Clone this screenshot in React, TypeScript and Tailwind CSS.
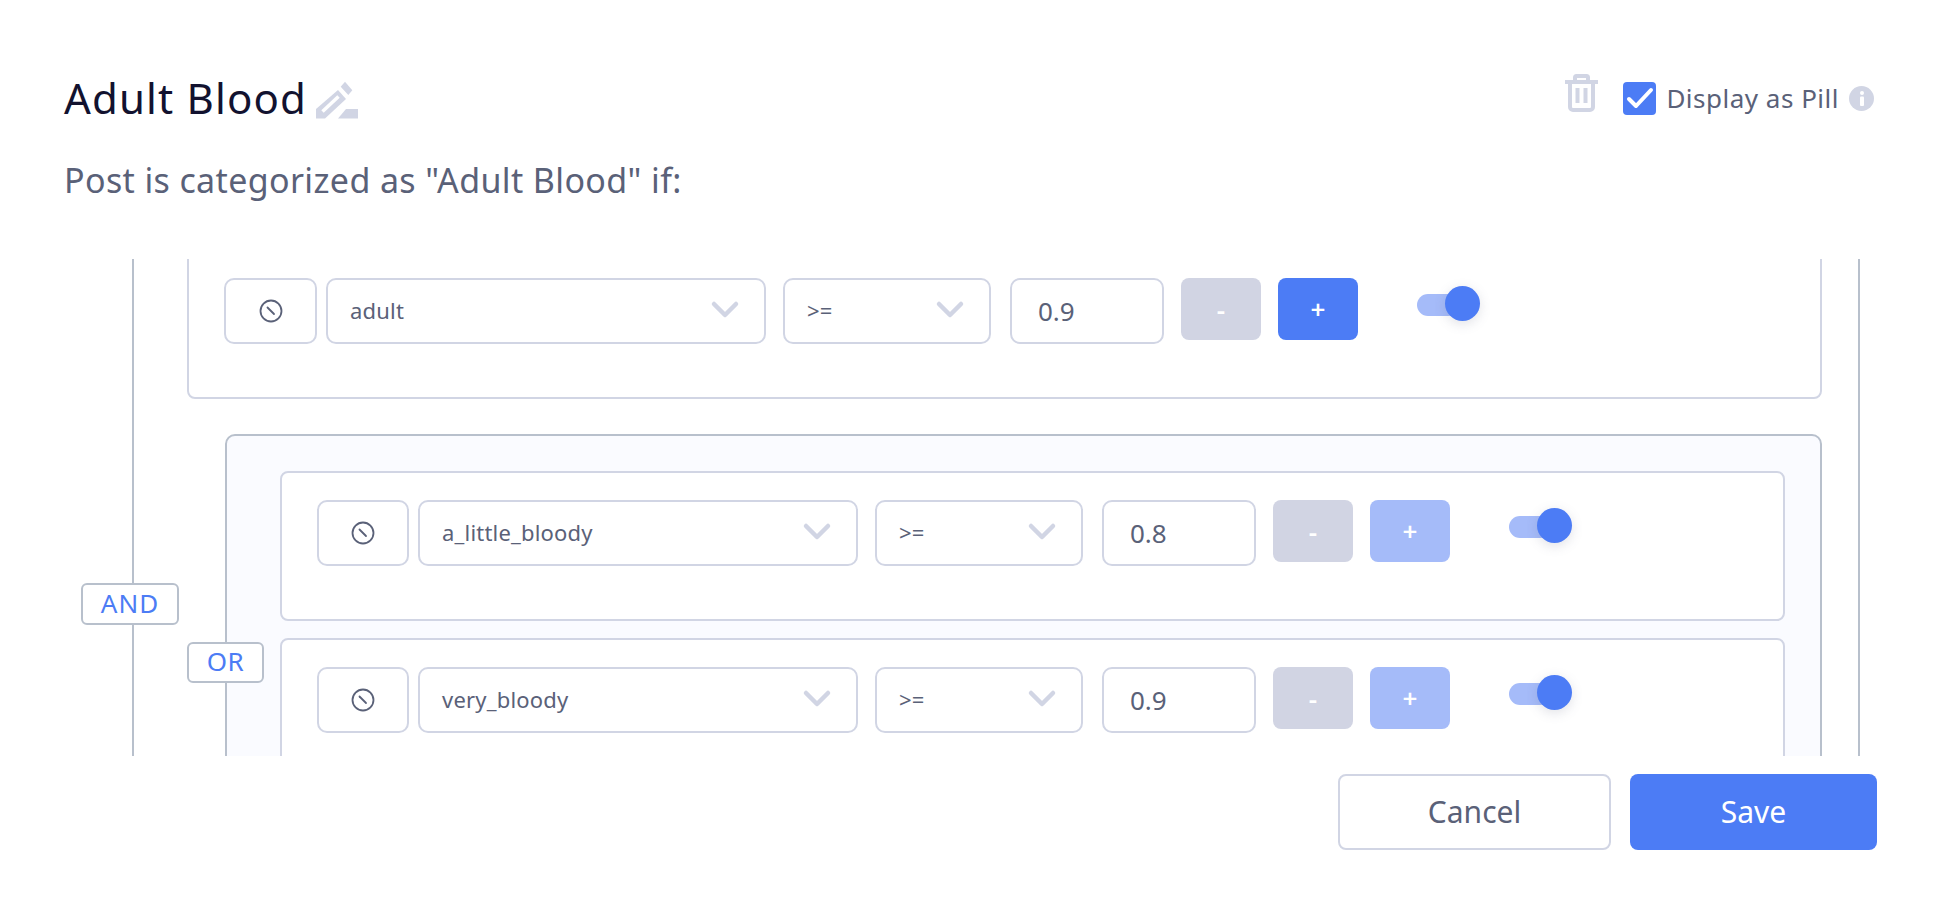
import React from 'react';

const FONT = 'font-["Noto_Sans",sans-serif]';

function BanIcon() {
  return (
    <svg width="24" height="24" viewBox="0 0 24 24" fill="none" stroke="#5a6178" strokeWidth="1.8" strokeLinecap="round">
      <circle cx="12" cy="12" r="10.5" />
      <path d="M8.5 8.5 15 15" />
    </svg>
  );
}

function Chevron() {
  return (
    <svg width="30" height="20" viewBox="0 0 30 20" fill="none" stroke="#d1d5e4" strokeWidth="4.5" strokeLinecap="round" strokeLinejoin="round">
      <path d="M4 4 15 15 26 4" />
    </svg>
  );
}

function Toggle() {
  return (
    <div className="relative w-[63px] h-[36px] shrink-0 mt-[8px] pt-[8px]">
      <div className="w-[42px] h-[22px] rounded-full bg-[#a5bbf9]" />
      <div className="absolute left-[28px] top-0 w-[35px] h-[35px] rounded-full bg-[#4c7cf5] shadow-[0_3px_12px_rgba(90,97,120,0.18)]" />
    </div>
  );
}

function ConditionRow({
  label,
  value,
  plusActive,
  iconWidth = 'w-[92px]',
}: {
  label: string;
  value: string;
  plusActive?: boolean;
  iconWidth?: string;
}) {
  const box = 'h-[66px] shrink-0 rounded-[10px] border-2 border-[#d1d5e4] bg-white flex items-center';
  return (
    <div className="flex items-start">
      <div className={`${box} ${iconWidth} justify-center`}>
        <BanIcon />
      </div>
      <div className={`${box} w-[440px] ml-[9px] pl-[22px] pr-[24px] pb-[2px] justify-between text-[22px] tracking-[0.2px] text-[#5a6178]`}>
        <span>{label}</span>
        <Chevron />
      </div>
      <div className={`${box} w-[208px] ml-[17px] pl-[22px] pr-[24px] pb-[2px] justify-between text-[22px] tracking-[0.2px] text-[#5a6178]`}>
        <span>&gt;=</span>
        <Chevron />
      </div>
      <div className={`${box} w-[154px] ml-[19px] pl-[26px] text-[26px] text-[#5a6178]`}>{value}</div>
      <div className="h-[62px] w-[80px] ml-[17px] shrink-0 rounded-[8px] bg-[#d1d4e3] flex items-center justify-center text-white text-[26px] font-semibold">-</div>
      <div
        className={`h-[62px] w-[80px] ml-[17px] shrink-0 rounded-[8px] flex items-center justify-center text-white text-[26px] font-semibold ${
          plusActive ? 'bg-[#4c7cf5]' : 'bg-[#a5bbf9]'
        }`}
      >
        +
      </div>
      <div className="ml-[59px]">
        <Toggle />
      </div>
    </div>
  );
}

export default function App() {
  return (
    <div className={`${FONT} w-[1937px] h-[912px] bg-white overflow-hidden`}>
      {/* Header */}
      <div className="h-[259px] pl-[64px] pr-[60px] pt-[72px]">
        <div className="flex justify-between items-start">
          <div className="flex items-center h-[52px]">
            <span className="text-[42px] leading-[52px] tracking-[1.15px] text-[#12122f]">Adult Blood</span>
            <svg className="ml-[9px] mt-[4px]" width="42" height="38" viewBox="11 10 42 38" fill="#d1d5e4">
              <path d="M40 10.700 47.300 19.300 43.300 24 35.700 15.700Z" />
              <path d="M33 19 41 28 20 47.500H11V38Z" />
              <path d="M17.500 40.500 33.500 25.500" stroke="#fff" strokeWidth="3.500" />
              <path d="M33 47.500 41 38H53V47.500Z" />
            </svg>
          </div>
          <div className="flex items-center h-[52px] mr-[3px]">
            <svg className="-mt-[10px]" width="33" height="38" viewBox="0 0 33 38" fill="none" stroke="#d1d5e4" strokeWidth="4">
              <path d="M0 8H33" />
              <path d="M10 8V3.500A1.500 1.500 0 0 1 11.500 2H21.500A1.500 1.500 0 0 1 23 3.500V8" />
              <path d="M5 8V33A3 3 0 0 0 8 36H25A3 3 0 0 0 28 33V8" />
              <path d="M12.500 14V29M20.500 14V29" />
            </svg>
            <div className="ml-[25px] w-[33px] h-[33px] rounded-[4px] bg-[#4c7cf5] flex items-center justify-center">
              <svg width="28" height="22" viewBox="0 0 28 22" fill="none" stroke="#fff" strokeWidth="4" strokeLinecap="round" strokeLinejoin="round">
                <path d="M3 12 10 19 25 3" />
              </svg>
            </div>
            <span className="ml-[10px] text-[26px] tracking-[0.5px] text-[#5a6178]">Display as Pill</span>
            <div className="ml-[10px] w-[25px] h-[25px] rounded-full bg-[#d1d5e4] flex items-center justify-center">
              <svg width="6" height="15" viewBox="0 0 6 15" fill="#fff">
                <circle cx="3" cy="2" r="2" />
                <rect x="1" y="5.500" width="4" height="9.500" rx="1" />
              </svg>
            </div>
          </div>
        </div>
        <p className="mt-[33px] text-[34px] leading-[46px] tracking-[0.37px] text-[#5a6178]">Post is categorized as "Adult Blood" if:</p>
      </div>

      {/* Scrolled rule area */}
      <div className="h-[497px] overflow-hidden pl-[132px]">
        <div className="relative flow-root w-[1728px] h-full border-x-2 border-[#b8c0cc] pl-[53px] pr-[36px]">
          <div className="-mt-[40px] h-[180px] rounded-[8px] border-2 border-[#d1d5e4] pl-[35px] pt-[57px]">
            <ConditionRow label="adult" value="0.9" plusActive iconWidth="w-[93px]" />
          </div>

          <div className="relative ml-[38px] mt-[35px] rounded-[10px] border-2 border-[#b8c0cc] bg-[#fafbff] pt-[35px] pl-[53px] pr-[35px] pb-[40px]">
            <div className="flex flex-col gap-[17px]">
              <div className="h-[150px] rounded-[8px] border-2 border-[#d1d5e4] bg-white pl-[35px] pt-[27px]">
                <ConditionRow label="a_little_bloody" value="0.8" />
              </div>
              <div className="h-[149px] rounded-[8px] border-2 border-[#d1d5e4] bg-white pl-[35px] pt-[27px]">
                <ConditionRow label="very_bloody" value="0.9" />
              </div>
            </div>
            <div className="absolute left-[-40px] top-[206px] w-[77px] h-[41px] pb-[2px] rounded-[6px] border-2 border-[#b8c0cc] bg-white flex items-center justify-center text-[26px] tracking-[0.5px] text-[#4c7cf5]">
              OR
            </div>
          </div>

          <div className="absolute left-[-53px] top-[324px] w-[98px] h-[42px] pb-[2px] rounded-[6px] border-2 border-[#b8c0cc] bg-white flex items-center justify-center text-[26px] tracking-[1px] text-[#4c7cf5]">
            AND
          </div>
        </div>
      </div>

      {/* Footer */}
      <div className="flex justify-end gap-[19px] pt-[18px] pr-[60px]">
        <button className="w-[273px] h-[76px] pb-[2px] rounded-[8px] border-2 border-[#d1d5e4] bg-white text-[30px] text-[#5a6178]">Cancel</button>
        <button className="w-[247px] h-[76px] pb-[2px] rounded-[8px] bg-[#4c7cf5] text-[30px] text-white">Save</button>
      </div>
    </div>
  );
}
